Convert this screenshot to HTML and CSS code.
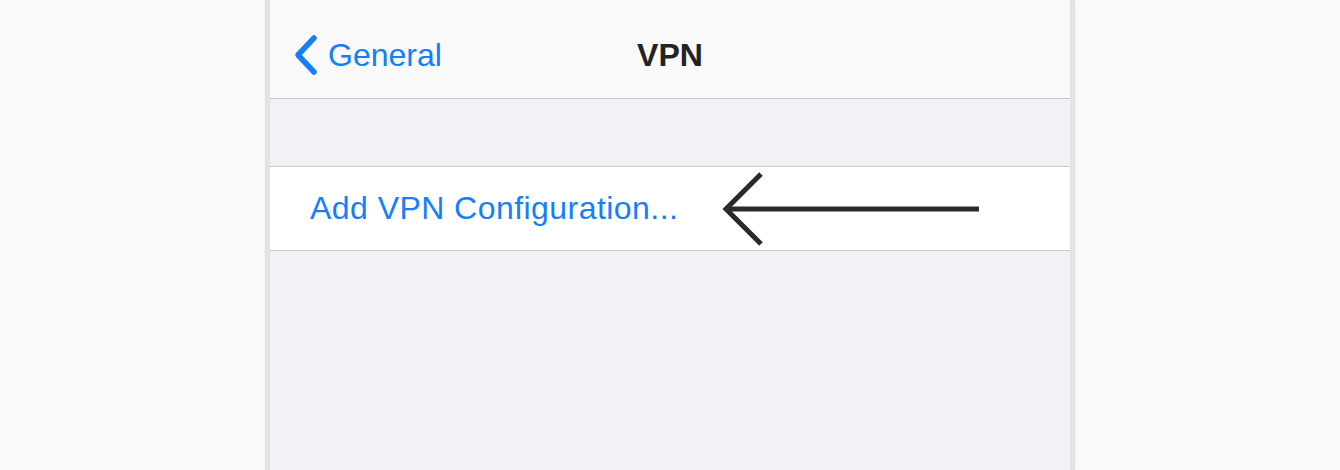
FILE: index.html
```html
<!DOCTYPE html>
<html lang="en">
<head>
    <meta charset="UTF-8">
    <meta name="viewport" content="width=device-width, initial-scale=1.0">
    <title>VPN</title>
    <link rel="stylesheet" href="styles.css">
</head>
<body>
    <div class="phone">
        <!-- Navigation bar -->
        <div class="navbar">
            <a class="back" href="#">
                <svg class="chevron" width="28" height="44" viewBox="0 0 28 44">
                    <path d="M22 5 L6 22 L22 39" fill="none" stroke="#157efb" stroke-width="5.5" stroke-linecap="round" stroke-linejoin="round"/>
                </svg>
                <span>General</span>
            </a>
            <div class="title">VPN</div>
            <div></div>
        </div>

        <!-- Settings group -->
        <div class="group">
            <div class="cell">
                <span class="cell-label">Add VPN Configuration...</span>
                <svg class="pointer" width="262" height="76" viewBox="0 0 262 76">
                    <path d="M40 3 L5 38 L40 73" fill="none" stroke="#2a2a2a" stroke-width="5"/>
                    <line x1="5" y1="38" x2="258" y2="38" stroke="#2a2a2a" stroke-width="5"/>
                </svg>
            </div>
        </div>
    </div>
</body>
</html>
```

FILE: styles.css
```css
/* General Body Styles */
body {
    font-family: "Liberation Sans", Arial, sans-serif;
    background-color: #fafafa;
    margin: 0;
    padding: 0;
}

/* Phone frame */
.phone {
    width: 800px;
    height: 470px;
    margin: 0 auto;
    background-color: #f1f1f6;
    border-left: 5px solid #e2e3e7;
    border-right: 5px solid #e2e3e7;
    box-shadow: 0 0 4px rgba(0, 0, 0, 0.06);
}

/* Navigation bar */
.navbar {
    height: 86px;
    padding-top: 12px;
    display: grid;
    grid-template-columns: 1fr auto 1fr;
    align-items: center;
    background-color: #f9f9f9;
    border-bottom: 1px solid #c4c5cb;
}

.back {
    display: flex;
    align-items: center;
    gap: 8px;
    padding-left: 22px;
    color: #157efb;
    font-size: 32px;
    text-decoration: none;
}

.title {
    font-size: 32px;
    font-weight: bold;
    color: #232323;
}

/* Group */
.group {
    margin-top: 67px;
    background-color: #fff;
    border-top: 1px solid #c8c8ce;
    border-bottom: 1px solid #c8c8ce;
}

.cell {
    height: 83px;
    display: flex;
    align-items: center;
    padding-left: 40px;
}

.cell-label {
    font-size: 32px;
    letter-spacing: 0.45px;
    color: #157efb;
}

.pointer {
    margin-left: 43px;
}
```
